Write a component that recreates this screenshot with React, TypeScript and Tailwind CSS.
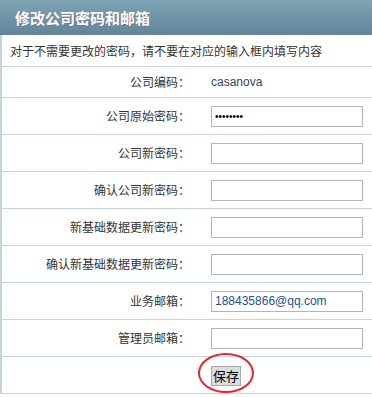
import React from 'react';

type Row = {
  label: string;
  kind: 'text' | 'input';
  value?: string;
  small?: boolean;
};

const rows: Row[] = [
  { label: '公司原始密码：', kind: 'input', value: '••••••••', small: true },
  { label: '公司新密码：', kind: 'input' },
  { label: '确认公司新密码：', kind: 'input' },
  { label: '新基础数据更新密码：', kind: 'input' },
  { label: '确认新基础数据更新密码：', kind: 'input' },
  { label: '业务邮箱：', kind: 'input', value: '188435866@qq.com' },
  { label: '管理员邮箱：', kind: 'input' },
];

const cjk = "font-['Noto_Sans_CJK_SC','Liberation_Sans',sans-serif]";

const FormRow: React.FC<{ label: string; tall?: boolean; children: React.ReactNode }> = ({ label, tall, children }) => (
  <div className={`flex items-center border-b border-[#c7d5df] ${tall ? 'h-[37px]' : 'h-[31px]'}`}>
    <div className={`w-[188px] text-right text-[12px] leading-[16px] text-[#333] ${cjk}`}>{label}</div>
    <div className="pl-[21px] flex items-center">{children}</div>
  </div>
);

const App: React.FC = () => {
  return (
    <div className="w-[372px] h-[397px] bg-white overflow-hidden">
      <div className="h-[35px] bg-linear-to-b from-[#7ea4b5] to-[#63859a] flex items-center pl-[15px] pt-[1px]">
        <span className={`text-[15px] font-bold text-white leading-[18px] ${cjk} [text-shadow:1px_1px_0_rgba(160,70,100,0.35)]`}>
          修改公司密码和邮箱
        </span>
      </div>
      <div className="border-l-2 border-[#c4d4df]">
        <div className={`h-[32px] flex items-center pl-[8px] border-b border-[#c7d5df] text-[12px] leading-[16px] text-[#333] ${cjk}`}>
          对于不需要更改的密码，请不要在对应的输入框内填写内容
        </div>
        <FormRow label="公司编码：">
          <span className="text-[12px] text-[#3a434c] font-['Liberation_Sans',sans-serif]">casanova</span>
        </FormRow>
        {rows.map((r) => (
          <FormRow key={r.label} label={r.label} tall>
            <input
              type="text"
              readOnly
              value={r.value ?? ''}
              className={`w-[152px] h-[21px] border border-[#b5b5b5] bg-white px-[3px] outline-none font-['Liberation_Sans',sans-serif] ${
                r.small ? 'text-[10px] text-black' : 'text-[12px] text-[#23508a]'
              }`}
            />
          </FormRow>
        ))}
        <div className="h-[37px] flex items-center border-b border-[#c7d5df]">
          <div className="w-[188px]" />
          <div className="pl-[21px]">
            <span className="relative inline-block">
              <button
                className={`w-[30px] h-[20px] bg-[#dcdcdc] border border-[#a9a9a9] text-[13px] leading-[16px] text-black p-0 ${cjk}`}
              >
                保存
              </button>
              <span className="absolute -left-[13px] -top-[10px] w-[56px] h-[40px] rounded-[50%] border-2 border-[#e3262c] pointer-events-none" />
            </span>
          </div>
        </div>
      </div>
    </div>
  );
};

export default App;
